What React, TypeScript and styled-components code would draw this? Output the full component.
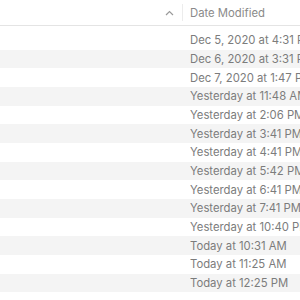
import React from "react";
import styled, { createGlobalStyle } from "styled-components";

const dates = [
  "Dec 5, 2020 at 4:31 PM",
  "Dec 6, 2020 at 3:31 PM",
  "Dec 7, 2020 at 1:47 PM",
  "Yesterday at 11:48 AM",
  "Yesterday at 2:06 PM",
  "Yesterday at 3:41 PM",
  "Yesterday at 4:41 PM",
  "Yesterday at 5:42 PM",
  "Yesterday at 6:41 PM",
  "Yesterday at 7:41 PM",
  "Yesterday at 10:40 PM",
  "Today at 10:31 AM",
  "Today at 11:25 AM",
  "Today at 12:25 PM",
];

const GlobalStyle = createGlobalStyle`
  html, body {
    margin: 0;
    padding: 0;
    background: #ffffff;
    font-family: "Inter", "Liberation Sans", sans-serif;
  }
`;

const Window = styled.div`
  width: 300px;
  height: 300px;
  overflow: hidden;
  background: #ffffff;
`;

const Header = styled.div`
  display: grid;
  grid-template-columns: 183px 1fr;
  height: 26px;
  border-bottom: 1px solid #e4e4e4;
  box-sizing: border-box;
`;

const SortCell = styled.div`
  display: flex;
  align-items: center;
  justify-content: flex-end;
  padding-right: 8px;
  border-right: 1px solid #ececec;
  margin: 4px 0 4px;
`;

const HeaderLabel = styled.div`
  display: flex;
  align-items: center;
  padding-left: 7px;
  font-size: 11.3px;
  color: #8a8a8a;
  white-space: nowrap;
`;

const List = styled.div`
  padding-top: 5px;
`;

const Row = styled.div<{ $striped: boolean }>`
  display: grid;
  grid-template-columns: 1fr 110px;
  height: 18.67px;
  align-items: center;
  background: ${(p) => (p.$striped ? "#f4f4f4" : "#ffffff")};
`;

const DateCell = styled.div`
  font-size: 11.3px;
  color: #7c7c7c;
  white-space: nowrap;
  overflow: hidden;
`;

const Chevron = () => (
  <svg width="9" height="6" viewBox="0 0 9 6">
    <path d="M1 5 L4.5 1.5 L8 5" fill="none" stroke="#9a9a9a" strokeWidth="1.2" />
  </svg>
);

export default function App() {
  return (
    <Window>
      <GlobalStyle />
      <Header>
        <SortCell>
          <Chevron />
        </SortCell>
        <HeaderLabel>Date Modified</HeaderLabel>
      </Header>
      <List>
        {dates.map((d, i) => (
          <Row key={d} $striped={i % 2 === 1}>
            <span />
            <DateCell>{d}</DateCell>
          </Row>
        ))}
      </List>
    </Window>
  );
}
